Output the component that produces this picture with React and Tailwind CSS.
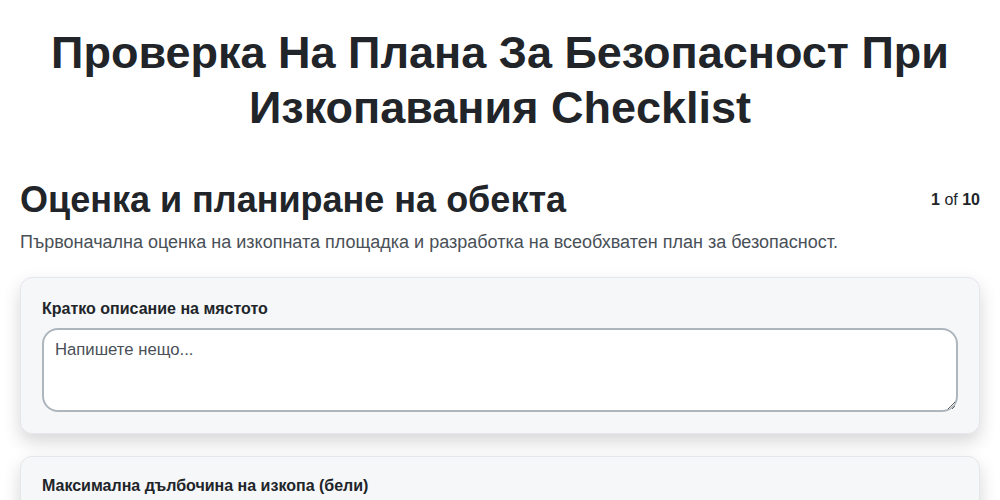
import React from "react";

export default function App() {
  return (
    <div
      className="min-h-screen bg-white px-5 text-[#212529]"
      style={{ fontFamily: '"Liberation Sans", Arial, sans-serif' }}
    >
      <h1 className="pt-[25px] text-center text-[45px] font-bold leading-[55px]">
        Проверка На Плана За Безопасност При Изкопавания Checklist
      </h1>

      <div className="mt-[43px] flex items-center justify-between">
        <h2 className="text-[36px] font-bold leading-[1.2]">
          Оценка и планиране на обекта
        </h2>
        <div className="text-base">
          <span className="font-bold">1</span> of <span className="font-bold">10</span>
        </div>
      </div>
      <p className="mt-[8px] text-[18px] leading-[1.5] text-[#495057]">
        Първоначална оценка на изкопната площадка и разработка на всеобхватен план за безопасност.
      </p>

      <div className="mt-[21px] flex flex-col gap-[22px]">
        <div className="rounded-xl border border-[#e5e7eb] bg-[#f6f7f9] px-[21px] pt-[19px] pb-[21px] shadow-[0_8px_18px_rgba(0,0,0,0.16)]">
          <label className="mb-[7px] block text-base font-bold leading-6">
            Кратко описание на мястото
          </label>
          <textarea
            placeholder="Напишете нещо..."
            className="block h-[84px] w-full rounded-2xl border-2 border-[#adb5bd] bg-white px-[11px] py-[8px] text-[16.7px] leading-6 text-[#212529] placeholder:text-[#495057] outline-none"
          />
        </div>
        <div className="rounded-xl border border-[#e5e7eb] bg-[#f6f7f9] px-[21px] pt-[17px] pb-[21px] shadow-[0_8px_18px_rgba(0,0,0,0.16)]">
          <label className="mb-[7px] block text-base font-bold leading-6">
            Максимална дълбочина на изкопа (бели)
          </label>
          <input
            type="number"
            className="block h-[44px] w-full rounded-2xl border-2 border-[#adb5bd] bg-white px-[11px] text-base"
          />
        </div>
      </div>
    </div>
  );
}
